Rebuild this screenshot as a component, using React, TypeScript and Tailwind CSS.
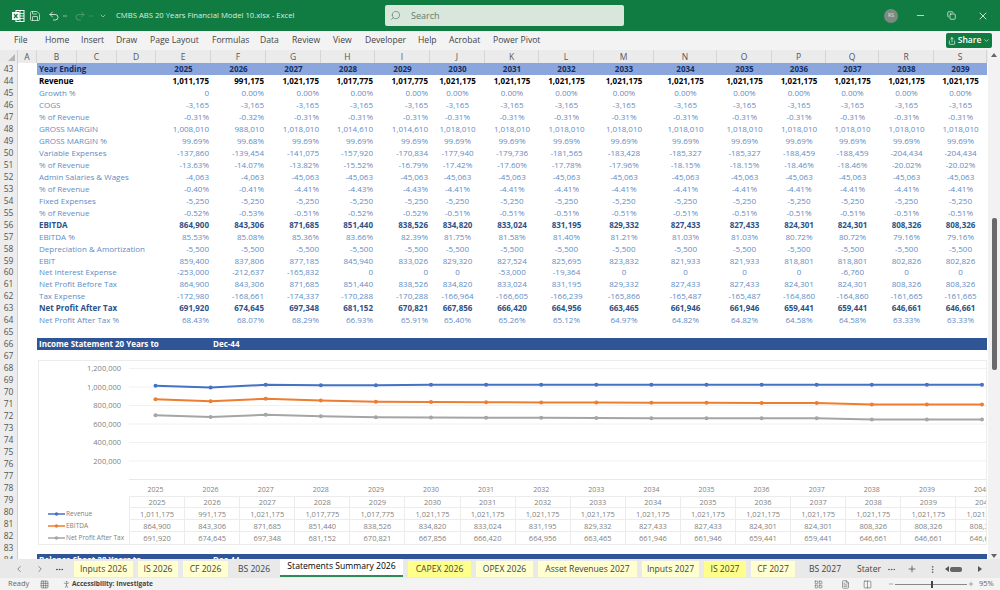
import { ChevronLeft, ChevronRight, ChevronDown, Copy, Grid3x3, LayoutGrid, Minus, MoreHorizontal, MoreVertical, PersonStanding, Plus, Redo2, Save, Search, Share, Undo2, X, Columns2, FileText } from 'lucide-react';

const rep = (v: string, n: number) => Array<string>(n).fill(v);
const pct = (list: string) => list.split(' ').map((v) => v + '%');

const gridCols =
  'grid grid-cols-[40px_40px_39px_55px_55px_55px_54px_55px_55px_54px_55px_60px_63px_55px_54px_53px_55px_53px]';
const headCols =
  'grid grid-cols-[18px_19px_40px_40px_39px_55px_55px_55px_54px_55px_55px_54px_55px_60px_63px_55px_54px_53px_55px_53px]';

const letters = ['A', 'B', 'C', 'D', 'E', 'F', 'G', 'H', 'I', 'J', 'K', 'L', 'M', 'N', 'O', 'P', 'Q', 'R', 'S'];
const years = Array.from({ length: 15 }, (_, i) => String(2025 + i));

const ebitda = ['864,900', '843,306', '871,685', '851,440', '838,526', '834,820', '833,024', '831,195', '829,332', '827,433', '827,433', '824,301', '824,301', '808,326', '808,326'];
const npat = ['691,920', '674,645', '697,348', '681,152', '670,821', '667,856', '666,420', '664,956', '663,465', '661,946', '661,946', '659,441', '659,441', '646,661', '646,661'];
const revenue = ['1,011,175', '991,175', '1,021,175', '1,017,775', '1,017,775', ...rep('1,021,175', 10)];

type Row = { label: string; values: string[]; kind?: 'black' | 'navy' };

const rows: Row[] = [
  { label: 'Revenue', values: revenue, kind: 'black' },
  { label: 'Growth %', values: ['0', ...rep('0.00%', 14)] },
  { label: 'COGS', values: rep('-3,165', 15) },
  { label: '% of Revenue', values: ['-0.31%', '-0.32%', ...rep('-0.31%', 13)] },
  { label: 'GROSS MARGIN', values: ['1,008,010', '988,010', '1,018,010', '1,014,610', '1,014,610', ...rep('1,018,010', 10)] },
  { label: 'GROSS MARGIN %', values: ['99.69%', '99.68%', ...rep('99.69%', 13)] },
  { label: 'Variable Expenses', values: ['-137,860', '-139,454', '-141,075', '-157,920', '-170,834', '-177,940', '-179,736', '-181,565', '-183,428', '-185,327', '-185,327', '-188,459', '-188,459', '-204,434', '-204,434'] },
  { label: '% of Revenue', values: pct('-13.63 -14.07 -13.82 -15.52 -16.79 -17.42 -17.60 -17.78 -17.96 -18.15 -18.15 -18.46 -18.46 -20.02 -20.02') },
  { label: 'Admin Salaries & Wages', values: ['-4,063', '-4,063', ...rep('-45,063', 13)] },
  { label: '% of Revenue', values: ['-0.40%', '-0.41%', '-4.41%', '-4.43%', '-4.43%', ...rep('-4.41%', 10)] },
  { label: 'Fixed Expenses', values: rep('-5,250', 15) },
  { label: '% of Revenue', values: ['-0.52%', '-0.53%', '-0.51%', '-0.52%', '-0.52%', ...rep('-0.51%', 10)] },
  { label: 'EBITDA', values: ebitda, kind: 'navy' },
  { label: 'EBITDA %', values: pct('85.53 85.08 85.36 83.66 82.39 81.75 81.58 81.40 81.21 81.03 81.03 80.72 80.72 79.16 79.16') },
  { label: 'Depreciation & Amortization', values: rep('-5,500', 15) },
  { label: 'EBIT', values: ['859,400', '837,806', '877,185', '845,940', '833,026', '829,320', '827,524', '825,695', '823,832', '821,933', '821,933', '818,801', '818,801', '802,826', '802,826'] },
  { label: 'Net Interest Expense', values: ['-253,000', '-212,637', '-165,832', '0', '0', '0', '-53,000', '-19,364', '0', '0', '0', '0', '-6,760', '0', '0'] },
  { label: 'Net Profit Before Tax', values: ebitda },
  { label: 'Tax Expense', values: ['-172,980', '-168,661', '-174,337', '-170,288', '-170,288', '-166,964', '-166,605', '-166,239', '-165,866', '-165,487', '-165,487', '-164,860', '-164,860', '-161,665', '-161,665'] },
  { label: 'Net Profit After Tax', values: npat, kind: 'navy' },
  { label: 'Net Profit After Tax %', values: pct('68.43 68.07 68.29 66.93 65.91 65.40 65.26 65.12 64.97 64.82 64.82 64.58 64.58 63.33 63.33') },
];

const menu = [
  { name: 'File', cls: 'w-[31px]' },
  { name: 'Home', cls: 'w-[36px]' },
  { name: 'Insert', cls: 'w-[35px]' },
  { name: 'Draw', cls: 'w-[34px]' },
  { name: 'Page Layout', cls: 'w-[62px]' },
  { name: 'Formulas', cls: 'w-[48px]' },
  { name: 'Data', cls: 'w-[32px]' },
  { name: 'Review', cls: 'w-[41px]' },
  { name: 'View', cls: 'w-[32px]' },
  { name: 'Developer', cls: 'w-[53px]' },
  { name: 'Help', cls: 'w-[31px]' },
  { name: 'Acrobat', cls: 'w-[44px]' },
  { name: 'Power Pivot', cls: 'w-[60px]' },
];

const tabs = [
  { name: 'Inputs 2026', cls: 'w-[59px] bg-[#ffffcf]' },
  { name: 'IS 2026', cls: 'w-[40px] bg-[#ffffcf]' },
  { name: 'CF 2026', cls: 'w-[45px] bg-[#ffffcf]' },
  { name: 'BS 2026', cls: 'w-[42px]' },
  { name: 'Statements Summary 2026', cls: 'w-[123px] bg-white text-black border-b-2 border-[#2e8b57] -mt-[2px] pb-[2px]' },
  { name: 'CAPEX 2026', cls: 'w-[63px] bg-[#ffff8c]' },
  { name: 'OPEX 2026', cls: 'w-[57px] bg-[#ffffcf]' },
  { name: 'Asset Revenues 2027', cls: 'w-[99px] bg-[#ffffcf]' },
  { name: 'Inputs 2027', cls: 'w-[57px] bg-[#ffffcf]' },
  { name: 'IS 2027', cls: 'w-[42px] bg-[#ffff8c]' },
  { name: 'CF 2027', cls: 'w-[44px] bg-[#ffffcf]' },
  { name: 'BS 2027', cls: 'w-[50px]' },
  { name: 'Stater', cls: 'w-[28px]' },
];

// chart drawn in page coordinates, see viewBox
const yOf = (v: number) => 478.5 - v * 0.0000927;
const xOf = (i: number) => 154.5 + 55.1 * i;
const num = (s: string) => Number(s.replace(/,/g, ''));
const linePoints = (list: string[]) =>
  [...list, list[list.length - 1]].map((s, i) => ({ x: xOf(i), y: yOf(num(s)) }));

const series = [
  { color: '#4472c4', points: linePoints(revenue), list: [...revenue, '1,021,175'], name: 'Revenue' },
  { color: '#ed7d31', points: linePoints(ebitda), list: [...ebitda, '808,326'], name: 'EBITDA' },
  { color: '#a5a5a5', points: linePoints(npat), list: [...npat, '646,661'], name: 'Net Profit After Tax' },
];

const axis = ['1,200,000', '1,000,000', '800,000', '600,000', '400,000', '200,000'];

const ExcelLogo = () => (
  <svg width="14" height="14" viewBox="0 0 14 14">
    <rect x="5" y="1.5" width="8" height="11" fill="none" stroke="#fff" strokeWidth="1" />
    <path d="M5 4.5h8M5 7h8M5 9.5h8M9 1.5v11" stroke="#fff" strokeWidth="0.8" />
    <rect x="1" y="3" width="7.5" height="8" fill="#fff" />
    <path d="M3 5l3.5 4M6.5 5L3 9" stroke="#107c41" strokeWidth="1.2" />
  </svg>
);

const Chart = () => (
  <div className="ml-[1px] mt-[10px] h-[185px] w-[949px] overflow-hidden border border-[#ececec] bg-white">
    <svg width="949" height="135" viewBox="38 360 949 135" className="block">
      {axis.map((label, i) => (
        <g key={label}>
          <line x1="128" x2="987" y1={367.5 + i * 18.5} y2={367.5 + i * 18.5} stroke="#f1f1f1" strokeWidth="1" />
          <text x="120" y={370 + i * 18.5} textAnchor="end" fontSize="7.5" fill="#7f7f7f">
            {label}
          </text>
        </g>
      ))}
      <line x1="128" x2="987" y1="478.5" y2="478.5" stroke="#e8e8e8" strokeWidth="1" />
      {series.map((s) => (
        <g key={s.name}>
          <polyline
            points={s.points.map((p) => `${p.x},${p.y}`).join(' ')}
            fill="none"
            stroke={s.color}
            strokeWidth="2"
          />
          {s.points.map((p) => (
            <circle key={p.x} cx={p.x} cy={p.y} r="2" fill={s.color} />
          ))}
        </g>
      ))}
      {[...years, '2040'].map((y, i) => (
        <text key={y} x={xOf(i)} y="490.5" textAnchor="middle" fontSize="7" fill="#7f7f7f">
          {y}
        </text>
      ))}
    </svg>
    <div className="text-[7.5px] leading-[11px] text-[#7f7f7f]">
      <div className="grid h-[11px] grid-cols-[90px_repeat(16,55.1px)]">
        <div />
        {[...years, '2040'].map((y) => (
          <div key={y} className="border-l border-t border-[#ececec] text-center">
            {y}
          </div>
        ))}
      </div>
      {series.map((s) => (
        <div key={s.name} className="grid h-[12px] grid-cols-[90px_repeat(16,55.1px)] leading-[12px]">
          <div className="flex items-center pl-[9px]">
            <svg width="17" height="6" viewBox="0 0 17 6" className="shrink-0">
              <line x1="0" x2="17" y1="3" y2="3" stroke={s.color} strokeWidth="1.5" />
              <circle cx="8.5" cy="3" r="1.8" fill={s.color} />
            </svg>
            <span className="ml-[1px] whitespace-nowrap text-[6.5px]">{s.name}</span>
          </div>
          {s.list.map((v, i) => (
            <div key={i} className="whitespace-nowrap border-l border-t border-[#ececec] text-center">
              {v}
            </div>
          ))}
        </div>
      ))}
    </div>
  </div>
);

export default function App() {
  return (
    <div className="flex h-[590px] w-[1000px] flex-col overflow-hidden bg-white font-['Open_Sans',sans-serif] text-[8px]">
      {/* title bar */}
      <div className="flex h-[31px] shrink-0 items-center bg-[#107c41] text-white">
        <div className="ml-[9px] flex w-[17px] justify-center">
          <ExcelLogo />
        </div>
        <Save size={12} strokeWidth={1.5} className="ml-[3px] text-[#e2f0e8]" />
        <Undo2 size={12} strokeWidth={1.5} className="ml-[7px]" />
        <Minus size={6} className="ml-[2px]" />
        <Redo2 size={12} strokeWidth={1.5} className="ml-[6px] text-[#5aa57d]" />
        <Minus size={6} className="ml-[2px] text-[#5aa57d]" />
        <ChevronDown size={8} className="ml-[5px] text-[#bcdcca]" />
        <span className="ml-[9px] w-[269px] text-[7.7px] text-[#dcefe4]">CMBS ABS 20 Years Financial Model 10.xlsx - Excel</span>
        <div className="flex h-[21px] w-[239px] items-center rounded-[2px] bg-[#d8e6dc] pl-[5px] text-[9px] text-[#5f7f6c]">
          <Search size={11} strokeWidth={1.5} className="-scale-x-100" />
          <span className="ml-[10px]">Search</span>
        </div>
        <div className="ml-[260px] flex h-[14px] w-[14px] items-center justify-center rounded-full bg-[#7d8a82] text-[5px] text-[#dfe5e1]">
          RS
        </div>
        <Minus size={11} strokeWidth={1.5} className="ml-[17px]" />
        <Copy size={9} strokeWidth={1.8} className="ml-[21px]" />
        <X size={12} strokeWidth={1.5} className="ml-[21px]" />
      </div>

      {/* ribbon tabs */}
      <div className="flex h-[19px] shrink-0 items-center bg-[#f3f3f3] text-[8.6px] text-[#444]">
        <div className="ml-[14px] flex flex-1">
          {menu.map((m) => (
            <span key={m.name} className={`whitespace-nowrap ${m.cls}`}>
              {m.name}
            </span>
          ))}
        </div>
        <div className="mr-[8px] flex h-[15px] w-[46px] items-center justify-center gap-[2px] rounded-[2px] bg-[#107c41] text-[8.5px] font-semibold text-white">
          <Share size={8} />
          Share
          <ChevronDown size={7} />
        </div>
      </div>

      {/* sheet */}
      <div className="flex min-h-0 flex-1">
        <div className="flex w-[988px] flex-col overflow-hidden">
          <div className={`${headCols} h-[13px] shrink-0 bg-[#ebebeb] text-center text-[8.5px] leading-[13px] text-[#555]`}>
            <div className="flex items-end justify-end border-r border-[#cfcfcf] p-[2px]">
              <div className="h-0 w-0 border-b-[7px] border-l-[7px] border-b-[#b5b5b5] border-l-transparent" />
            </div>
            {letters.map((l) => (
              <div key={l} className="border-r border-[#d5d5d5]">
                {l}
              </div>
            ))}
          </div>

          <div className="flex min-h-0 flex-1 overflow-hidden">
            <div className="w-[18px] shrink-0 border-r border-[#d0d0d0] bg-[#ededed] text-center text-[8.5px] text-[#555]">
              {Array.from({ length: 42 }, (_, i) => (
                <div key={i} className="h-[11.975px] leading-[12px]">
                  {43 + i}
                </div>
              ))}
            </div>

            <div className="ml-[19px] w-[950px] shrink-0">
              <div className={`${gridCols} h-[11.975px] bg-[#8ba6dc] font-bold leading-[12px] text-[#142f63]`}>
                <div className="col-span-3 pl-[2px]">Year Ending</div>
                {years.map((y) => (
                  <div key={y} className="text-center">
                    {y}
                  </div>
                ))}
              </div>

              {rows.map((row, r) => (
                <div
                  key={r}
                  className={`${gridCols} h-[11.975px] leading-[12px] ${
                    row.kind === 'black'
                      ? 'font-bold text-black'
                      : row.kind === 'navy'
                        ? 'font-bold text-[#2d5288]'
                        : 'text-[#5f8cc4]'
                  }`}
                >
                  <div className="col-span-3 whitespace-nowrap pl-[2px]">{row.label}</div>
                  {row.values.map((v, i) => (
                    <div key={i} className={i < 5 ? 'pr-[2px] text-right' : 'text-center'}>
                      {v}
                    </div>
                  ))}
                </div>
              ))}

              <div className="h-[11.975px]" />

              <div className={`${gridCols} h-[11.975px] bg-[#2f5597] font-bold leading-[12px] text-white`}>
                <div className="col-span-4 pl-[2px]">Income Statement 20 Years to</div>
                <div className="pl-[2px]">Dec-44</div>
              </div>

              <Chart />

              <div className={`${gridCols} mt-[9px] h-[11.975px] bg-[#2f5597] font-bold leading-[12px] text-white`}>
                <div className="col-span-4 pl-[2px]">Balance Sheet 20 Years to</div>
                <div className="pl-[2px]">Dec-44</div>
              </div>
            </div>
          </div>
        </div>

        {/* vertical scrollbar */}
        <div className="flex w-[12px] flex-col items-center bg-[#f2f2f2] pt-[3px] text-[#666]">
          <div className="h-0 w-0 border-x-[3px] border-b-[4px] border-x-transparent border-b-[#666]" />
          <div className="mt-[161px] h-[152px] w-[5px] rounded-[2px] bg-[#6a6a6a]" />
          <div className="mt-auto mb-[1px] h-0 w-0 border-x-[3px] border-t-[4px] border-x-transparent border-t-[#666]" />
        </div>
      </div>

      {/* sheet tabs */}
      <div className="flex h-[19px] shrink-0 items-center bg-[#e9e9e9] pt-[1px] text-[8.6px] text-[#444]">
        <div className="flex w-[74px] shrink-0 items-center text-[#777]">
          <ChevronLeft size={10} className="ml-[14px]" />
          <ChevronRight size={10} className="ml-[11px]" />
          <MoreHorizontal size={9} className="ml-[10px] text-[#333]" />
        </div>
        <div className="flex h-[16px] gap-[5px]">
          {tabs.map((t) => (
            <div key={t.name} className={`flex items-center justify-center overflow-hidden whitespace-nowrap ${t.cls}`}>
              {t.name}
            </div>
          ))}
        </div>
        <div className="flex items-center text-[#555]">
          <MoreHorizontal size={9} className="ml-[4px]" />
          <Plus size={10} className="ml-[11px]" />
          <MoreVertical size={9} className="ml-[11px]" />
          <div className="ml-[8px] h-0 w-0 border-y-[3px] border-r-[4px] border-y-transparent border-r-[#555]" />
          <div className="ml-[1px] h-[5px] w-[12px] rounded-[2px] bg-[#666]" />
          <div className="ml-[16px] h-0 w-0 border-y-[3px] border-l-[4px] border-y-transparent border-l-[#555]" />
        </div>
      </div>

      {/* status bar */}
      <div className="flex h-[12px] shrink-0 items-center bg-[#f3f3f3] text-[7.5px] text-[#666]">
        <span className="ml-[8px] w-[32px]">Ready</span>
        <Grid3x3 size={9} strokeWidth={1.5} className="text-[#555]" />
        <PersonStanding size={9} strokeWidth={1.5} className="ml-[13px] text-[#555]" />
        <span className="ml-[1px] w-[80px] whitespace-nowrap text-[6.6px] font-bold text-[#444]">Accessibility: Investigate</span>
        <LayoutGrid size={9} strokeWidth={1.5} className="ml-[662px] text-[#555]" />
        <FileText size={9} strokeWidth={1.5} className="ml-[18px] text-[#555]" />
        <Columns2 size={9} strokeWidth={1.5} className="ml-[13px] text-[#555]" />
        <Minus size={6} className="ml-[16px]" />
        <div className="relative ml-[1px] h-[1px] w-[72px] bg-[#888]">
          <div className="absolute left-[36px] top-[-3px] h-[7px] w-[2px] bg-[#444]" />
        </div>
        <Plus size={6} className="ml-[1px]" />
        <span className="ml-[5px]">95%</span>
      </div>
    </div>
  );
}
